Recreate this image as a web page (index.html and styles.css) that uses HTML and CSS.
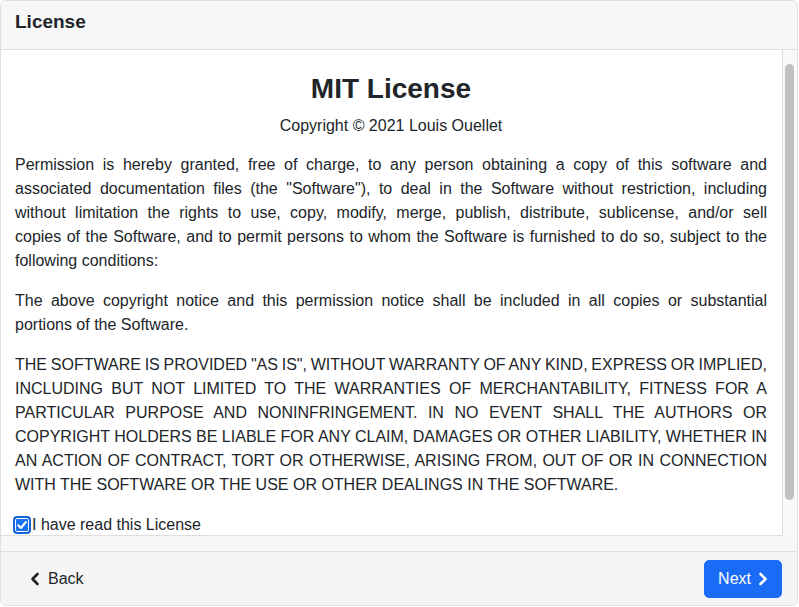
FILE: index.html
```html
<!DOCTYPE html>
<html lang="en">
<head>
<meta charset="utf-8">
<title>License</title>
<link rel="stylesheet" href="styles.css">
</head>
<body>
<div class="card">
  <div class="card-header">License</div>
  <div class="card-body">
    <div class="scroller">
      <div class="content">
        <h3 class="title">MIT License</h3>
        <p class="copy">Copyright © 2021 Louis Ouellet</p>
        <p class="para"><span class="ln">Permission is hereby granted, free of charge, to any person obtaining a copy of this software and</span><span class="ln">associated documentation files (the "Software"), to deal in the Software without restriction, including</span><span class="ln">without limitation the rights to use, copy, modify, merge, publish, distribute, sublicense, and/or sell</span><span class="ln">copies of the Software, and to permit persons to whom the Software is furnished to do so, subject to the</span><span class="last">following conditions:</span></p>
        <p class="para"><span class="ln">The above copyright notice and this permission notice shall be included in all copies or substantial</span><span class="last">portions of the Software.</span></p>
        <p class="para"><span class="ln tight">THE SOFTWARE IS PROVIDED "AS IS", WITHOUT WARRANTY OF ANY KIND, EXPRESS OR IMPLIED,</span><span class="ln">INCLUDING BUT NOT LIMITED TO THE WARRANTIES OF MERCHANTABILITY, FITNESS FOR A</span><span class="ln">PARTICULAR PURPOSE AND NONINFRINGEMENT. IN NO EVENT SHALL THE AUTHORS OR</span><span class="ln">COPYRIGHT HOLDERS BE LIABLE FOR ANY CLAIM, DAMAGES OR OTHER LIABILITY, WHETHER IN</span><span class="ln">AN ACTION OF CONTRACT, TORT OR OTHERWISE, ARISING FROM, OUT OF OR IN CONNECTION</span><span class="last">WITH THE SOFTWARE OR THE USE OR OTHER DEALINGS IN THE SOFTWARE.</span></p>
        <label class="check">
          <span class="box"><svg width="12" height="12" viewBox="0 0 12 12"><path d="M2.2 6.3 L4.9 9 L9.9 3" fill="none" stroke="#fff" stroke-width="2" stroke-linecap="round" stroke-linejoin="round"/></svg></span>I have read this License
        </label>
      </div>
      <div class="track"><div class="thumb"></div></div>
    </div>
  </div>
  <div class="card-footer">
    <button class="btn btn-back"><svg class="chev" width="10" height="14" viewBox="0 0 10 14"><path d="M7.5 2 L2.5 7 L7.5 12" fill="none" stroke="#212529" stroke-width="2.6" stroke-linecap="round" stroke-linejoin="round"/></svg>Back</button>
    <button class="btn btn-next">Next<svg class="chev chev-r" width="10" height="14" viewBox="0 0 10 14"><path d="M2.5 2 L7.5 7 L2.5 12" fill="none" stroke="#fff" stroke-width="2.6" stroke-linecap="round" stroke-linejoin="round"/></svg></button>
  </div>
</div>
</body>
</html>
```

FILE: styles.css
```css
* { box-sizing: border-box; }
html, body { margin: 0; padding: 0; background: #fff; }
body {
  font-family: "Liberation Sans", Arial, sans-serif;
  font-size: 16px;
  line-height: 24px;
  color: #212529;
  width: 799px;
  height: 607px;
}
.card {
  width: 798px;
  height: 606px;
  border: 1px solid #dfdfdf;
  border-radius: 6px;
  display: flex;
  flex-direction: column;
  overflow: hidden;
  background: #f7f7f7;
}
.card-header {
  height: 49px;
  flex: none;
  padding: 0 14px;
  font-size: 19px;
  font-weight: 600;
  line-height: 42px;
  background: #f7f7f7;
  border-bottom: 1px solid #dfdfdf;
}
.card-body {
  flex: none;
  height: 501px;
  padding-bottom: 14px;
  background: #f7f7f7;
}
.scroller {
  display: flex;
  height: 486px;
}
.content {
  flex: 1;
  background: #fff;
  border-right: 1px solid #dfdfdf;
  border-bottom: 1px solid #dfdfdf;
  overflow: hidden;
  padding: 22px 15px 0 14px;
}
.title {
  margin: 0 0 8px;
  text-align: center;
  font-size: 28px;
  font-weight: 700;
  line-height: 34px;
}
.copy {
  text-align: center;
  margin: 0 0 15px;
}
.para {
  margin: 0 0 16px;
  text-align: justify;
}
.ln {
  display: block;
  white-space: nowrap;
  text-align: justify;
  text-align-last: justify;
}
.tight { word-spacing: -1px; }
.last { display: block; }
.check {
  display: flex;
  align-items: center;
  height: 24px;
  margin-left: -2px;
}
.box {
  width: 18px;
  height: 18px;
  border: 2px solid #1565d8;
  border-radius: 4px;
  background: #1a73f0;
  box-shadow: inset 0 0 0 1px #fff;
  display: flex;
  align-items: center;
  justify-content: center;
  margin-right: 1px;
}
.box svg { display: block; }
.track {
  width: 14px;
  flex: none;
  background: #f9f9f9;
  padding: 14px 3px 0 2px;
}
.thumb {
  width: 9px;
  height: 436px;
  border-radius: 5px;
  background: #c1c1c1;
}
.card-footer {
  flex: 1;
  border-top: 1px solid #dfdfdf;
  display: flex;
  justify-content: space-between;
  align-items: center;
  padding: 0 15px;
  background: #f5f5f5;
}
.btn {
  font-family: inherit;
  font-size: 16px;
  line-height: 24px;
  height: 38px;
  padding: 6px 13px;
  border: 1px solid transparent;
  border-radius: 5px;
  display: flex;
  align-items: center;
  background: transparent;
  color: #212529;
}
.btn-next {
  background: #1a6cf6;
  color: #fff;
  border-color: #1a6cf6;
}
.chev { display: block; }
.btn-back .chev { margin-right: 8px; }
.chev-r { margin-left: 7px; }
```
